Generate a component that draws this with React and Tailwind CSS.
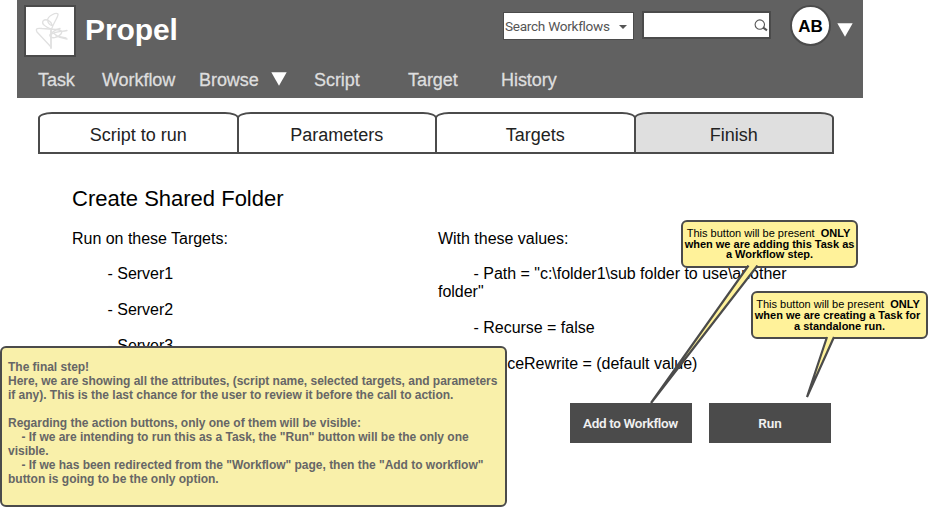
import React from "react";

const NAV = [
  { label: "Task", cls: "w-[64px]" },
  { label: "Workflow", cls: "w-[97px]" },
  { label: "Browse", cls: "w-[115px]", caret: true },
  { label: "Script", cls: "w-[94px]" },
  { label: "Target", cls: "w-[93px]" },
  { label: "History", cls: "w-[80px]" },
];

function Triangle({ className }) {
  return (
    <svg className={className} width="16" height="14" viewBox="0 0 16 14">
      <path d="M0.3 0.3H15.7L8 13.7Z" fill="#fff" />
    </svg>
  );
}

function Logo() {
  return (
    <div className="h-[52px] w-[52px] shrink-0 border-2 border-[#4b4b4b] bg-white">
      <svg width="48" height="48" viewBox="0 0 48 48" fill="none" stroke="#e0e0e0" strokeWidth="1.3" strokeLinecap="round" strokeLinejoin="round">
        <path d="M25 40L11 25C9 21 12 21 16 21.500L30 22.500C35 23 37 24 35 27C32 31 25 32 24 29C23 27 30 22 34 21.500" />
        <path d="M25 24C27 16 33 9 32 7C30 5 22 9 21.500 13C22 17 25 19 26 18C25 14 20 11 17 14C15 17 20 20 25 22" />
        <path d="M24 28C30 24 35 25 41 23.500M27 26L33 30L41 32M30 29L40 31" />
        <path d="M25 24V41" strokeWidth="1.8" />
      </svg>
    </div>
  );
}

function Header() {
  return (
    <header className="ml-[17px] flex h-[98px] w-[846px] flex-col bg-[#616161]">
      <div className="flex h-[62px] items-start pl-[7px] pt-[5px]">
        <Logo />
        <h1 className="ml-[9px] mt-[7px] w-[418px] text-[30px] leading-[36px] font-bold tracking-[-0.1px] text-white">Propel</h1>
        <div className="mt-[7px] flex h-[28px] w-[131px] items-center border border-[#4b4b4b] bg-white pt-px pl-[1px] text-[#555]">
          <span className="w-[114px] whitespace-nowrap font-[Roboto,sans-serif] text-[13.6px] tracking-[-0.28px]">Search Workflows</span>
          <svg width="8" height="4" viewBox="0 0 8 4"><path d="M0 0H8L4 4Z" fill="#555" /></svg>
        </div>
        <div className="ml-[8px] mt-[6px] flex h-[28px] w-[129px] items-center justify-end border-2 border-[#4b4b4b] bg-white">
          <svg className="mr-px" width="14" height="13" viewBox="0 0 14 13" fill="none" stroke="#555">
            <circle cx="5.8" cy="5.6" r="4.7" strokeWidth="1.1" />
            <path d="M9.2 8.7L13 11.3" strokeWidth="2" />
          </svg>
        </div>
        <div className="ml-[19px] flex h-[41px] w-[41px] items-center justify-center rounded-full border-2 border-[#4b4b4b] bg-white pt-[2px] text-[17px] font-bold text-black">AB</div>
        <Triangle className="ml-[6px] mt-[18px]" />
      </div>
      <nav className="flex pl-[21px] pt-[7px] text-[18px] leading-[22px] tracking-[-0.05px] text-[#dedede] [-webkit-text-stroke:0.3px_#dedede]">
        {NAV.map((n) => (
          <div key={n.label} className={n.cls + " flex"}>
            {n.label}
            {n.caret && <Triangle className="ml-[12px] mt-[3px]" />}
          </div>
        ))}
      </nav>
    </header>
  );
}

function Tabs() {
  return (
    <div className="ml-[38px] mt-[14px] flex h-[42px] text-[18px] text-[#222]">
      {["Script to run", "Parameters", "Targets", "Finish"].map((t, i) => (
        <div
          key={t}
          className={
            "flex w-[200.5px] items-center justify-center rounded-t-[14px_6px] border-2 border-[#4b4b4b] pt-[4px] " +
            (i > 0 ? "-ml-[2px] " : "") +
            (i === 3 ? "bg-[#dfdfdf]" : "bg-white")
          }
        >
          {t}
        </div>
      ))}
    </div>
  );
}

function Callout({ className, children }) {
  return (
    <div className={"absolute h-[48px] w-[177px] rounded-[6px] border-2 border-[#4b4b4b] bg-[#fff29a] pt-[6px] text-center text-[11px] font-bold whitespace-pre text-black " + className}>
      {children}
    </div>
  );
}

export default function App() {
  return (
    <main className="relative h-[507px] w-[928px] overflow-hidden bg-white font-['Liberation_Sans',Arial,sans-serif]">
      <Header />
      <Tabs />
      <section className="pl-[72px] pt-[32px] text-black">
        <h2 className="text-[22px] leading-[26px]">Create Shared Folder</h2>
        <div className="mt-[18px] flex text-[16px] leading-[18px] tracking-[-0.02px]">
          <div className="w-[366px]">
            <p>Run on these Targets:</p>
            <ul className="mt-[17px] space-y-[18px] pl-[35.500px]">
              <li>- Server1</li>
              <li>- Server2</li>
              <li>- Server3</li>
            </ul>
          </div>
          <div className="w-[380px]">
            <p>With these values:</p>
            <ul className="mt-[17px] space-y-[18px] indent-[35.500px]">
              <li>- Path = "c:\folder1\sub folder to use\another<br />folder"</li>
              <li>- Recurse = false</li>
              <li>- ForceRewrite = (default value)</li>
            </ul>
          </div>
        </div>
        <div className="ml-[497.500px] flex gap-[17.500px] pt-[30px] font-[Roboto,sans-serif] text-[13.5px] font-semibold tracking-[-0.35px] text-[#f0f0f0]">
          <button className="h-[40px] w-[122px] bg-[#4b4b4b]">Add to Workflow</button>
          <button className="h-[40px] w-[122px] bg-[#4b4b4b] tracking-normal">Run</button>
        </div>
      </section>

      <aside className="absolute top-[346px] left-0 h-[161px] w-[507px] rounded-[6px] border-2 border-[#4b4b4b] bg-[#f9f0aa] pt-[12px] pl-[6px] text-[12px] leading-[14px] font-bold tracking-[-0.017px] whitespace-pre text-[#666]">
        <p>The final step!</p>
        <p>Here, we are showing all the attributes, (script name, selected targets, and parameters</p>
        <p>if any). This is the last chance for the user to review it before the call to action.</p>
        <p className="mt-[14px]">Regarding the action buttons, only one of them will be visible:</p>
        <p className="pl-[13.500px]">- If we are intending to run this as a Task, the "Run" button will be the only one</p>
        <p>visible.</p>
        <p className="pl-[13.500px]">- If we has been redirected from the "Workflow" page, then the "Add to workflow"</p>
        <p>button is going to be the only option.</p>
      </aside>

      <Callout className="top-[220px] left-[681px] leading-[10.7px]">
        <p className="-ml-[2px]"><span className="font-normal">This button will be present  </span>ONLY</p>
        <p>when we are adding this Task as</p>
        <p>a Workflow step.</p>
      </Callout>
      <Callout className="top-[291px] left-[751px] leading-[11px]">
        <p className="-ml-[3px]"><span className="font-normal">This button will be present  </span>ONLY</p>
        <p className="-ml-[4px]">when we are creating a Task for</p>
        <p>a standalone run.</p>
      </Callout>
      <svg className="absolute top-[265px] left-[640px]" width="210" height="140" fill="#fff29a" stroke="#4b4b4b" strokeWidth="2.2" strokeLinejoin="bevel">
        <path d="M108.5 0.5L11 138L117.5 0.5" />
        <path d="M187 72L167 132L194 72" />
      </svg>
    </main>
  );
}
